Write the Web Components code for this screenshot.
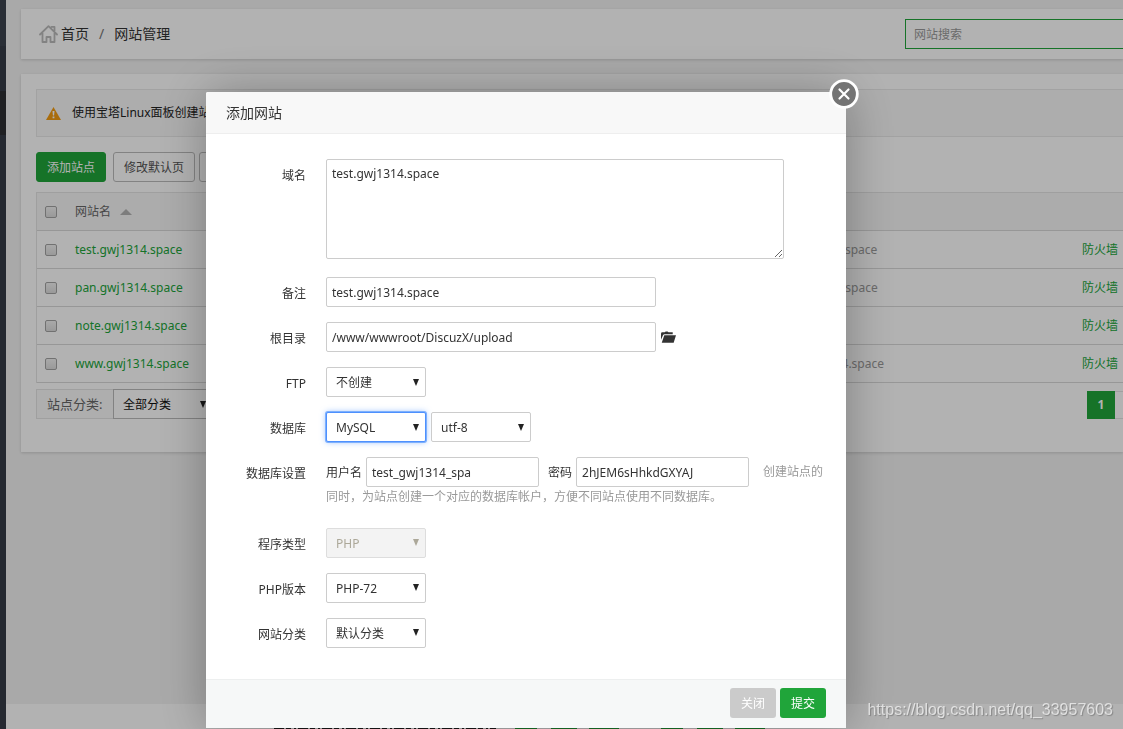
<!DOCTYPE html>
<html lang="zh-CN">
<head>
<meta charset="utf-8">
<title>网站管理</title>
<style>
  html { height: 100%; }
  body {
    margin: 0;
    min-height: 100%;
    overflow: hidden;
    background: #f3f3f3;
    color: #333;
    font: 12px/18px "Noto Sans", "Noto Sans CJK SC", sans-serif;
    --green: #20a53a;
    --line: #e4e4e4;
  }
</style>
</head>
<body>
<bt-shell>
  <bt-sidebar slot="side"></bt-sidebar>
  <bt-card><bt-crumbs></bt-crumbs></bt-card>
  <bt-card><bt-sites></bt-sites></bt-card>
  <bt-footer slot="foot"></bt-footer>
</bt-shell>
<bt-dialog>
  <span slot="title">添加网站</span>
  <bt-site-form></bt-site-form>
</bt-dialog>
<bt-mark>https://blog.csdn.net/qq_33957603</bt-mark>

<script>
const define = (name, html) => {
  const tpl = document.createElement('template');
  tpl.innerHTML = '<style>*{box-sizing:border-box}button,input,select,textarea{font:inherit;color:inherit;margin:0}</style>' + html;
  customElements.define(name, class extends HTMLElement {
    constructor() {
      super();
      this.attachShadow({ mode: 'open' }).append(tpl.content.cloneNode(true));
    }
  });
};

define('bt-shell', `
<style>
  :host { display: grid; grid-template-columns: 6px minmax(0, 1fr); min-height: 100vh; }
  .page { display: flex; flex-direction: column; }
  main { flex: 1; display: flex; flex-direction: column; gap: 15px; padding: 9px 0 0 15px; }
</style>
<slot name="side"></slot>
<div class="page"><main><slot></slot></main><slot name="foot"></slot></div>`);

define('bt-sidebar', `
<style>
  :host { display: grid; grid-template-rows: 46px 45px 44px 1fr; background: #3c424e; }
  div:nth-child(even) { background: #363c47; }
  .on { background: #2d2f33; }
  .rest { background: linear-gradient(#363c47, #3e434f); }
</style>
<div></div><div></div><div class="on"></div><div class="rest"></div>`);

define('bt-card', `
<style>:host { display: block; background: #fff; box-shadow: 0 1px 3px rgba(0,0,0,.16); }</style>
<slot></slot>`);

define('bt-crumbs', `
<style>
  :host { display: flex; align-items: center; justify-content: space-between; height: 50px; padding-left: 18px; font-size: 14px; }
  nav { display: flex; align-items: center; }
  svg { width: 19px; height: 19px; margin-right: 3px; }
  a { color: #333; text-decoration: none; }
  .sep { color: #777; margin: 0 10px; }
  input { width: 218px; height: 30px; padding: 0 8px; border: 1px solid var(--green); border-right: 0; background: #fff; font-size: 12px; outline: 0; border-radius: 0; }
  input::placeholder { color: #999; }
</style>
<nav aria-label="位置">
  <svg viewBox="0 0 19 19" fill="none" stroke="#bbb" stroke-width="1.800" stroke-linejoin="round" stroke-linecap="round"><path d="M1 9.500 9.500 1.200 18 9.500M12.500 1.800h3v4.500M3.500 8v9h4v-5h4v5h4V8"/></svg>
  <a href="#home">首页</a><span class="sep">/</span><a href="#site">网站管理</a>
</nav>
<input type="search" placeholder="网站搜索" aria-label="网站搜索">`);

const siteRow = (name, note) => `
  <tr><td><input type="checkbox" aria-label="选择 ${name}"></td>
  <td><a href="#${name}">${name}</a></td><td class="note">${note}</td><td><a href="#waf">防火墙</a></td></tr>`;

define('bt-sites', `
<style>
  :host { display: block; padding: 15px 0 33px 15px; }
  .tip { display: flex; align-items: center; height: 48px; padding-left: 9px; border: 1px solid #e8e8e8; border-right: 0; background: #f8f8f8; color: #222; line-height: 20px; }
  .tip svg { width: 15px; height: 13px; margin-right: 11px; }
  .tools { display: flex; gap: 4px; margin: 15px 0 10px; }
  .tools button { height: 30px; padding: 2px 10px 0; border: 1px solid #bbb; border-radius: 3px; background: #fff; color: #555; }
  .tools .main { width: 70px; padding: 2px 0 0; margin-right: 3px; background: var(--green); border-color: var(--green); color: #fff; }
  table { width: 100%; border-collapse: separate; border-spacing: 0; table-layout: fixed; border-left: 1px solid var(--line); }
  th, td { height: 38px; padding: 0 0 0 8px; border-bottom: 1px solid #d9d9d9; text-align: left; font-weight: 400; white-space: nowrap; }
  th { height: 39px; border-top: 1px solid var(--line); background: #f7f7f7; color: #666; }
  a { color: var(--green); text-decoration: none; }
  .note { color: #999; }
  .c1 { width: 30px; } .c2 { width: 695px; } .c4 { width: 49px; }
  input { display: block; appearance: none; width: 12px; height: 12px; border: 1px solid #a2a2a2; border-radius: 2px; background: linear-gradient(#f2f2f2, #dcdcdc); }
  .sort { display: inline-block; margin-left: 6px; border: solid transparent; border-width: 0 6px 6px; border-bottom-color: #b4b4b4; vertical-align: 1px; }
  .bottom { display: flex; justify-content: space-between; align-items: flex-end; margin-top: 6px; }
  .cat { display: flex; }
  .cat label { width: 77px; height: 30px; padding-left: 10px; border: 1px solid var(--line); border-right: 0; background: #fafafa; color: #666; font-size: 13px; line-height: 28px; }
  .pick { display: grid; width: 100px; }
  .pick > *, .pick::after { grid-area: 1 / 1; }
  .pick select { appearance: none; height: 30px; padding: 2px 9px 0; border: 1px solid #bbb; border-radius: 0; background: #fff; color: #111; }
  .pick::after { content: ""; justify-self: end; align-self: center; margin-right: 7px; border: solid transparent; border-width: 7px 3px 0; border-top-color: #222; pointer-events: none; }
  .pages { display: flex; height: 28px; }
  .pages a { width: 28px; background: var(--green); color: #fff; font-weight: 700; line-height: 28px; text-align: center; }
  .pages span { width: 8px; border: solid var(--line); border-width: 1px 0; }
</style>
<div class="tip"><svg viewBox="0 0 15 13"><path d="M7.500 0 15 13H0Z" fill="#f39c12"/><path d="M6.500 4h2l-.4 4.500H6.900ZM6.600 9.500h1.800v1.700H6.600Z" fill="#fff"/></svg>使用宝塔Linux面板创建站点</div>
<div class="tools"><button class="main">添加站点</button><button>修改默认页</button><button>默认站点</button></div>
<table>
  <colgroup><col class="c1"><col class="c2"><col><col class="c4"></colgroup>
  <thead><tr><th><input type="checkbox" aria-label="全选"></th><th>网站名 <i class="sort"></i></th><th></th><th></th></tr></thead>
  <tbody>${siteRow('test.gwj1314.space', 'test.gwj1314.space')}${siteRow('pan.gwj1314.space', 'pan.gwj1314.space')}${siteRow('note.gwj1314.space', '')}${siteRow('www.gwj1314.space', 'www.gwj1314.space')}</tbody>
</table>
<div class="bottom">
  <div class="cat"><label for="cat">站点分类:</label><span class="pick"><select id="cat"><option>全部分类</option></select></span></div>
  <div class="pages"><a href="#p1">1</a><span></span></div>
</div>`);

define('bt-footer', `
<style>
  :host { display: flex; align-items: flex-end; height: 25px; padding-left: 268px; background: #fff; }
  svg { width: 502px; height: 1px; }
</style>
<svg viewBox="0 0 502 1" fill="none"><path d="M0 .5h222" stroke="#222" stroke-dasharray="10 2 5 3 2 2"/><path d="M241 .5h261" stroke="#20a53a" stroke-dasharray="22 14 26 12 30 42"/></svg>`);

define('bt-dialog', `
<style>
  :host { position: fixed; inset: 0; display: flex; justify-content: center; align-items: flex-start; padding: 92px 71px 0 0; background: rgba(0,0,0,.3); }
  section { position: relative; width: 640px; background: #fff; border-radius: 2px; box-shadow: 1px 1px 50px rgba(0,0,0,.3); }
  header { height: 42px; padding: 0 20px; border-bottom: 1px solid #eee; border-radius: 2px 2px 0 0; background: #f8f8f8; font-size: 14px; line-height: 42px; }
  footer { display: flex; justify-content: flex-end; gap: 4px; padding: 8px 20px 10px; border-top: 1px solid #edefef; background: #f6f8f8; }
  footer button { width: 46px; height: 30px; padding: 2px 0 0; border: 0; border-radius: 3px; background: #cbcbcb; color: #fff; }
  footer .ok { background: var(--green); }
  .x { position: absolute; top: -13px; right: -13px; width: 30px; height: 30px; padding: 0; border: 0; background: none; }
  .x svg { display: block; width: 30px; height: 30px; }
</style>
<section role="dialog" aria-label="添加网站">
  <header><slot name="title"></slot></header>
  <slot></slot>
  <footer><button>关闭</button><button class="ok">提交</button></footer>
  <button class="x" aria-label="关闭窗口"><svg viewBox="0 0 30 30"><circle cx="15" cy="15" r="13.300" fill="#747474" stroke="#fff" stroke-width="2.800"/><path d="m10.500 10.500 9 9m0-9-9 9" stroke="#fff" stroke-width="2.200" stroke-linecap="round"/></svg></button>
</section>`);

const pick = (id, text, attrs = '') => `<span class="pick"><select id="${id}" ${attrs}><option>${text}</option></select></span>`;

define('bt-site-form', `
<style>
  :host { display: block; padding: 25px 20px 31px 0; }
  form { display: flex; flex-direction: column; gap: 15px; }
  .row { display: grid; grid-template-columns: 100px minmax(0, 1fr); column-gap: 20px; }
  .row > label, .row > .name { text-align: right; line-height: 34px; height: 30px; white-space: nowrap; }
  .field { display: flex; align-items: center; gap: 5px; }
  textarea, input { display: block; border: 1px solid #ccc; border-radius: 2px; background: #fff; padding: 0 5px; outline: 0; }
  textarea { width: 458px; height: 100px; padding: 5px; margin-bottom: 3px; }
  input { width: 330px; height: 30px; }
  .pick { display: grid; width: 100px; }
  .pick > *, .pick::after { grid-area: 1 / 1; }
  select { appearance: none; height: 30px; padding: 2px 9px 0; border: 1px solid #ccc; border-radius: 2px; background: #fff; outline: 0; }
  .pick::after { content: ""; justify-self: end; align-self: center; margin-right: 7px; border: solid transparent; border-width: 7px 3px 0; border-top-color: #222; pointer-events: none; }
  .on select { border-color: #4d90fe; box-shadow: 0 0 0 1px #7db0fd, 0 0 6px rgba(77,144,254,.6); }
  .off select { background: #f3f3f3; border-color: #ddd; color: #aca899; opacity: 1; }
  .off .pick::after { border-top-color: #aca899; }
  .db { margin-bottom: 7px; }
  .db label, .db input { display: inline-block; vertical-align: middle; }
  .db label { padding-top: 2px; }
  .db input { width: 173px; margin: 0 9px 0 4px; }
  .hint { color: #999; vertical-align: middle; }
  .db input + .hint { margin-left: 5px; }
  .folder { padding: 0; border: 0; background: none; }
  .folder svg { display: block; width: 15px; height: 12px; }
</style>
<form>
  <div class="row"><label for="dom">域名</label><div class="field"><textarea id="dom">test.gwj1314.space</textarea></div></div>
  <div class="row"><label for="ps">备注</label><div class="field"><input id="ps" value="test.gwj1314.space"></div></div>
  <div class="row"><label for="path">根目录</label><div class="field"><input id="path" value="/www/wwwroot/DiscuzX/upload"><button type="button" class="folder" aria-label="选择目录"><svg viewBox="0 0 16 12" fill="#333"><path d="M0 9V2.500Q0 1 1.500 1H4l1-1h2l1 1h4.500v2H4Q2.500 3 2 4.500Z"/><path d="M3.500 4H16l-2.500 8H.8Z"/></svg></button></div></div>
  <div class="row"><label for="ftp">FTP</label><div class="field">${pick('ftp', '不创建')}</div></div>
  <div class="row"><label for="sql">数据库</label><div class="field"><span class="on">${pick('sql', 'MySQL')}</span>${pick('code', 'utf-8', 'aria-label="字符集"')}</div></div>
  <div class="row"><span class="name">数据库设置</span><div class="db"><label for="user">用户名</label><input id="user" value="test_gwj1314_spa"><label for="pw">密码</label><input id="pw" value="2hJEM6sHhkdGXYAJ"><span class="hint">创建站点的</span><span class="hint">同时，为站点创建一个对应的数据库帐户，方便不同站点使用不同数据库。</span></div></div>
  <div class="row"><label for="type">程序类型</label><div class="field off">${pick('type', 'PHP', 'disabled')}</div></div>
  <div class="row"><label for="ver">PHP版本</label><div class="field">${pick('ver', 'PHP-72')}</div></div>
  <div class="row"><label for="grp">网站分类</label><div class="field">${pick('grp', '默认分类')}</div></div>
</form>`);

define('bt-mark', `
<style>
  :host { position: fixed; right: 10px; bottom: 9px; color: rgba(255,255,255,.65); font: 16px/20px "Liberation Sans", sans-serif; text-shadow: 1px 1px 1px rgba(0,0,0,.25); pointer-events: none; }
</style>
<slot></slot>`);
</script>
</body>
</html>
